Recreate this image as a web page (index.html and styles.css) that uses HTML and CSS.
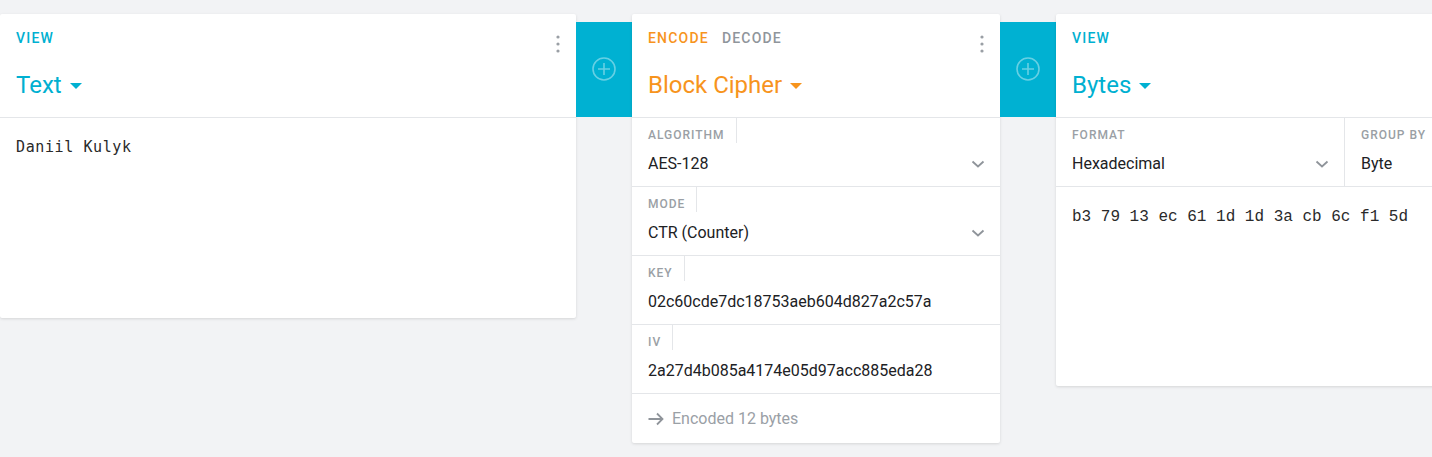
FILE: index.html
```html
<!DOCTYPE html>
<html>
<head>
<meta charset="utf-8">
<link rel="stylesheet" href="styles.css">
</head>
<body>
<div class="pipeline">
  <section class="card card-view">
    <header class="card-head">
      <div class="tabs"><span class="tab tab-teal">VIEW</span></div>
      <div class="title title-teal">Text <span class="caret"></span></div>
      <svg class="dots" width="4" height="18" viewBox="0 0 4 18"><circle cx="2" cy="2" r="1.6"/><circle cx="2" cy="9" r="1.6"/><circle cx="2" cy="16" r="1.6"/></svg>
    </header>
    <div class="text-body">Daniil Kulyk</div>
  </section>

  <div class="adder"><svg width="26" height="26" viewBox="0 0 26 26"><circle cx="13" cy="13" r="11" fill="none" stroke="rgba(255,255,255,0.4)" stroke-width="1.6"/><path d="M13 7v12M7 13h12" stroke="rgba(255,255,255,0.4)" stroke-width="1.6"/></svg></div>

  <section class="card card-enc">
    <header class="card-head">
      <div class="tabs"><span class="tab tab-orange">ENCODE</span><span class="tab tab-gray">DECODE</span></div>
      <div class="title title-orange">Block Cipher <span class="caret caret-orange"></span></div>
      <svg class="dots" width="4" height="18" viewBox="0 0 4 18"><circle cx="2" cy="2" r="1.6"/><circle cx="2" cy="9" r="1.6"/><circle cx="2" cy="16" r="1.6"/></svg>
    </header>
    <div class="field">
      <div class="label">ALGORITHM</div>
      <div class="value">AES-128</div>
      <svg class="chev" width="14" height="8" viewBox="0 0 14 8"><path d="M1.5 1.5l5.5 5 5.5-5" fill="none" stroke="#8f949a" stroke-width="1.8"/></svg>
    </div>
    <div class="field">
      <div class="label">MODE</div>
      <div class="value">CTR (Counter)</div>
      <svg class="chev" width="14" height="8" viewBox="0 0 14 8"><path d="M1.5 1.5l5.5 5 5.5-5" fill="none" stroke="#8f949a" stroke-width="1.8"/></svg>
    </div>
    <div class="field">
      <div class="label">KEY</div>
      <div class="value">02c60cde7dc18753aeb604d827a2c57a</div>
    </div>
    <div class="field">
      <div class="label">IV</div>
      <div class="value">2a27d4b085a4174e05d97acc885eda28</div>
    </div>
    <footer class="status">
      <svg width="16" height="14" viewBox="0 0 16 14"><path d="M0.5 7h14M9 1.5l5.5 5.5-5.5 5.5" fill="none" stroke="#8f949a" stroke-width="1.8"/></svg>
      <span>Encoded 12 bytes</span>
    </footer>
  </section>

  <div class="adder"><svg width="26" height="26" viewBox="0 0 26 26"><circle cx="13" cy="13" r="11" fill="none" stroke="rgba(255,255,255,0.4)" stroke-width="1.6"/><path d="M13 7v12M7 13h12" stroke="rgba(255,255,255,0.4)" stroke-width="1.6"/></svg></div>

  <section class="card card-bytes">
    <header class="card-head">
      <div class="tabs"><span class="tab tab-teal">VIEW</span></div>
      <div class="title title-teal">Bytes <span class="caret"></span></div>
    </header>
    <div class="field-row">
      <div class="field field-format">
        <div class="label label-plain">FORMAT</div>
        <div class="value">Hexadecimal</div>
        <svg class="chev" width="14" height="8" viewBox="0 0 14 8"><path d="M1.5 1.5l5.5 5 5.5-5" fill="none" stroke="#8f949a" stroke-width="1.8"/></svg>
      </div>
      <div class="field field-group">
        <div class="label label-plain">GROUP BY</div>
        <div class="value">Byte</div>
      </div>
    </div>
    <div class="bytes-body">b3 79 13 ec 61 1d 1d 3a cb 6c f1 5d</div>
  </section>
</div>
</body>
</html>
```

FILE: styles.css
```css
html, body {
  margin: 0;
  padding: 0;
  background: #f2f3f5;
  overflow: hidden;
  width: 1432px;
  height: 457px;
  font-family: Roboto, "Liberation Sans", sans-serif;
}

.pipeline {
  display: flex;
  align-items: flex-start;
  padding-top: 14px;
}

.card {
  flex: none;
  background: #fff;
  border-radius: 2px;
  box-shadow: 0 1px 3px rgba(0, 0, 0, 0.12);
  display: flex;
  flex-direction: column;
}

.card-view { width: 576px; height: 304px; }
.card-enc { width: 368px; }
.card-bytes { width: 600px; height: 372px; }

.card-head {
  position: relative;
  padding: 16px 16px 16px;
  border-bottom: 1px solid #e4e6e9;
  height: 71px;
}

.tabs {
  display: flex;
  gap: 13px;
  line-height: 16px;
  height: 16px;
}

.tab {
  font-size: 14px;
  font-weight: 500;
  letter-spacing: 1.2px;
}

.tab-teal { color: #00b0d1; }
.tab-orange { color: #f7941d; }
.tab-gray { color: #8f959b; }

.title {
  margin-top: 23px;
  font-size: 24px;
  line-height: 32px;
  display: flex;
  align-items: center;
}

.title-teal { color: #00b0d1; }
.title-orange { color: #f7941d; }

.caret {
  display: inline-block;
  width: 0;
  height: 0;
  margin-left: 8px;
  margin-top: 2px;
  border-left: 6px solid transparent;
  border-right: 6px solid transparent;
  border-top: 6px solid #00b0d1;
}

.caret-orange { border-top-color: #f7941d; }

.dots {
  position: absolute;
  top: 21px;
  right: 16px;
  fill: #9a9fa5;
}

.adder {
  flex: none;
  width: 56px;
  height: 95px;
  margin-top: 8px;
  background: #00b1d2;
  display: flex;
  align-items: center;
  justify-content: center;
}

.adder svg { margin-top: -1px; }

.text-body {
  padding: 17px 16px;
  font-family: "DejaVu Sans Mono", monospace;
  font-size: 15px;
  line-height: 24px;
  color: #2a2a2a;
  letter-spacing: 0.6px;
}

.field {
  position: relative;
  padding: 0 16px 12px;
  border-bottom: 1px solid #e4e6e9;
}

.label {
  display: inline-block;
  padding: 10px 11px 0 0;
  height: 15px;
  line-height: 14px;
  font-size: 12px;
  font-weight: 500;
  letter-spacing: 1px;
  color: #9a9fa5;
  border-right: 1px solid #e4e6e9;
  vertical-align: top;
}

.label-plain { border-right: none; }

.value {
  margin-top: 11px;
  font-size: 16px;
  line-height: 20px;
  color: #202124;
}

.chev {
  position: absolute;
  right: 15px;
  top: 42px;
}

.status {
  height: 49px;
  padding: 0 16px;
  display: flex;
  align-items: center;
  gap: 8px;
  font-size: 16px;
  color: #9aa0a6;
}

.field-row {
  display: flex;
  border-bottom: 1px solid #e4e6e9;
}

.field-row .field { border-bottom: none; }

.field-format {
  width: 256px;
  border-right: 1px solid #e4e6e9;
}

.field-group { flex: 1; }

.bytes-body {
  padding: 18px 16px;
  font-family: "Liberation Mono", monospace;
  font-size: 16px;
  line-height: 24px;
  color: #2a2a2a;
}
```
